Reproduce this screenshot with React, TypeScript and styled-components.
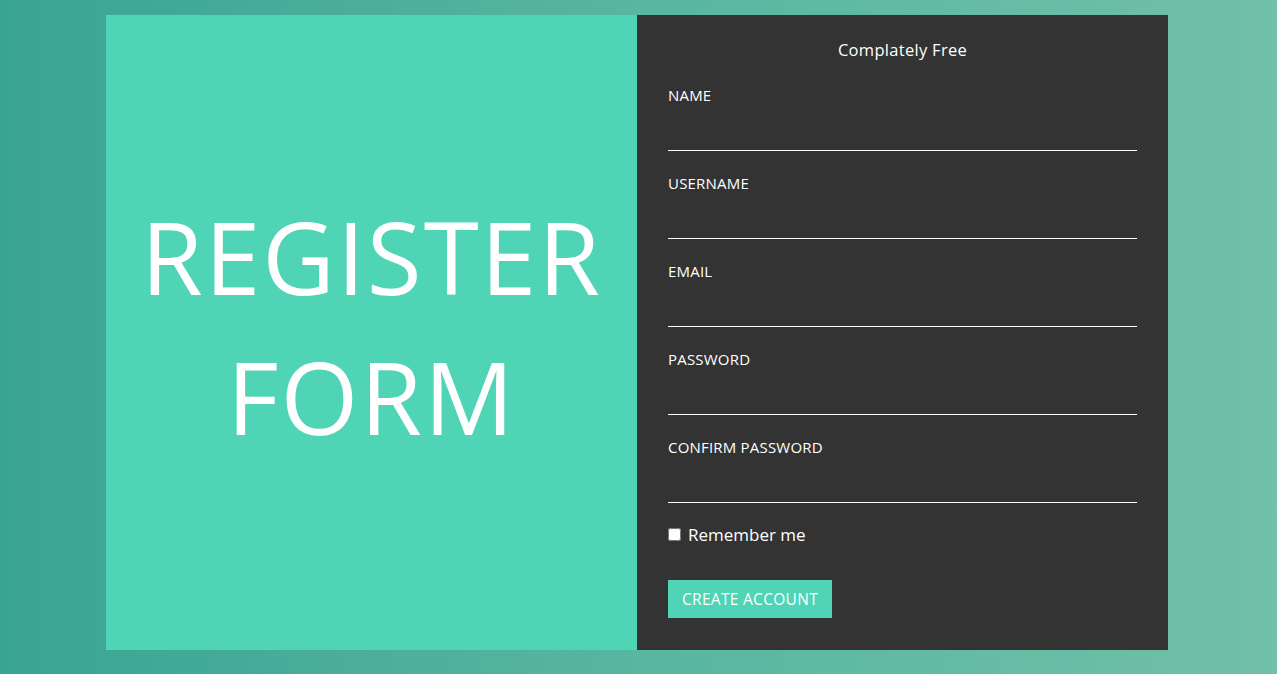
import React from "react";
import styled, { createGlobalStyle } from "styled-components";

const Global = createGlobalStyle`
  html, body { margin: 0; padding: 0; }
  body {
    font-family: "Open Sans", "Noto Sans", sans-serif;
    background: linear-gradient(to right, #3aa493 0%, #58b6a1 50%, #71c0a7 100%);
    min-height: 674px;
  }
  * { box-sizing: border-box; }
`;

const Page = styled.div`
  width: 1277px;
  height: 674px;
  padding: 15px 0 0 106px;
`;

const Card = styled.div`
  display: grid;
  grid-template-columns: 531px 531px;
  height: 635px;
`;

const Hero = styled.div`
  background: #4fd4b5;
  display: flex;
  align-items: center;
  justify-content: center;
  padding-bottom: 14px;
`;

const HeroTitle = styled.h1`
  margin: 0;
  color: #fff;
  font-family: "Open Sans", sans-serif;
  font-weight: 400;
  font-size: 100px;
  line-height: 140px;
  text-align: center;
  letter-spacing: 2px;
`;

const FormPanel = styled.form`
  background: #333333;
  padding: 24px 31px 0 31px;
  display: flex;
  flex-direction: column;
  color: #fff;
`;

const Tagline = styled.div`
  text-align: center;
  font-size: 16.5px;
  font-weight: 500;
  line-height: 22px;
  height: 22px;
  letter-spacing: 0.3px;
  margin-bottom: 23px;
`;

const Field = styled.div`
  display: flex;
  flex-direction: column;
  margin-bottom: 21px;
`;

const Label = styled.label`
  font-size: 15px;
  font-weight: 500;
  line-height: 22px;
  letter-spacing: 0.2px;
  text-transform: uppercase;
`;

const Input = styled.input`
  height: 45px;
  background: transparent;
  border: none;
  border-bottom: 1px solid #ffffff;
  color: #fff;
  outline: none;
  font: inherit;
`;

const CheckRow = styled.label`
  display: flex;
  align-items: center;
  height: 22px;
  margin-top: -1px;
  font-size: 17px;
  font-weight: 500;
`;

const Check = styled.input`
  width: 13px;
  height: 13px;
  margin: 0 7px 0 0;
  accent-color: #dddddd;
`;

const Button = styled.button`
  margin-top: 35px;
  align-self: flex-start;
  width: 164px;
  height: 38px;
  border: none;
  background: #4fd4b5;
  color: #fff;
  font-family: "Open Sans", sans-serif;
  font-size: 15.5px;
  font-weight: 500;
  letter-spacing: 0.3px;
  padding: 0;
  cursor: pointer;
`;

const fields = ["Name", "Username", "Email", "Password", "Confirm Password"];

export default function App() {
  return (
    <>
      <Global />
      <Page>
        <Card>
          <Hero>
            <HeroTitle>
              REGISTER
              <br />
              FORM
            </HeroTitle>
          </Hero>
          <FormPanel onSubmit={(e) => e.preventDefault()}>
            <Tagline>Complately Free</Tagline>
            {fields.map((f) => (
              <Field key={f}>
                <Label>{f}</Label>
                <Input type={f.toLowerCase().includes("password") ? "password" : "text"} />
              </Field>
            ))}
            <CheckRow>
              <Check type="checkbox" />
              Remember me
            </CheckRow>
            <Button type="submit">CREATE ACCOUNT</Button>
          </FormPanel>
        </Card>
      </Page>
    </>
  );
}
